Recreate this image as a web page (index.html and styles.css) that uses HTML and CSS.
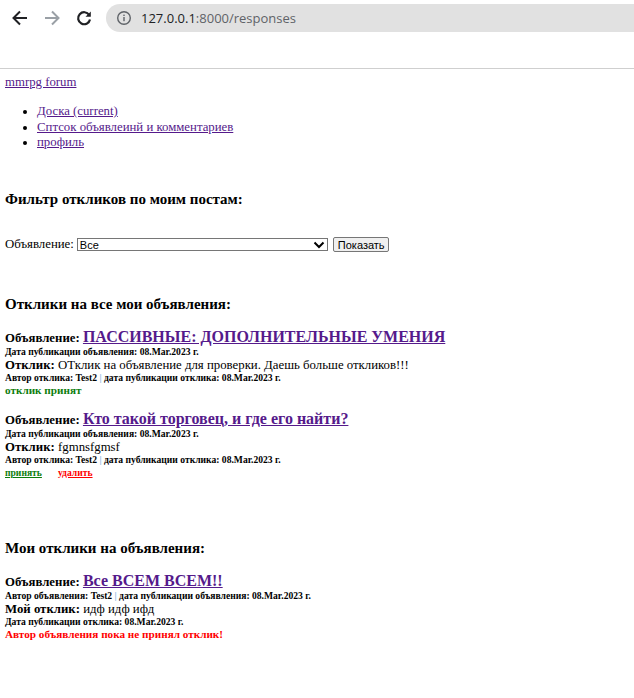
FILE: index.html
```html
<!DOCTYPE html>
<html lang="ru">
<head>
<meta charset="utf-8">
<title>responses</title>
<link rel="stylesheet" href="styles.css">
</head>
<body>
<div class="chrome">
  <div class="toolbar">
    <svg class="nav-icon" width="20" height="20" viewBox="0 0 20 20"><path d="M17 10H4M10 3.5L3.5 10 10 16.5" fill="none" stroke="#202124" stroke-width="2"/></svg>
    <svg class="nav-icon" width="20" height="20" viewBox="0 0 20 20"><path d="M3 10h13M10 3.5l6.5 6.5-6.5 6.5" fill="none" stroke="#9aa0a6" stroke-width="2"/></svg>
    <svg class="nav-icon" width="20" height="20" viewBox="0 0 20 20"><path d="M15.2 7A6 6 0 1 0 16 11.5" fill="none" stroke="#202124" stroke-width="2.2"/><path d="M16.8 3.5v5.3h-5.3z" fill="#202124"/></svg>
    <div class="omnibox">
      <svg class="info" width="16" height="16" viewBox="0 0 16 16"><circle cx="8" cy="8" r="6.3" fill="none" stroke="#5f6368" stroke-width="1.4"/><rect x="7.3" y="7" width="1.4" height="4.2" fill="#5f6368"/><rect x="7.3" y="4.6" width="1.4" height="1.4" fill="#5f6368"/></svg>
      <span class="host">127.0.0.1</span><span class="path">:8000/responses</span>
    </div>
  </div>
</div>
<div class="page">
  <div class="brand-row"><a class="brand" href="#">mmrpg forum</a></div>
  <ul class="menu">
    <li><a href="#">Доска (current)</a></li>
    <li><a href="#">Сптсок объявлеинй и комментариев</a></li>
    <li><a href="#">профиль</a></li>
  </ul>

  <h3 class="heading heading-filter">Фильтр откликов по моим постам:</h3>
  <form class="filter">
    <label class="filter-label">Объявление:</label>
    <span class="select"><span>Все</span><svg width="12" height="8" viewBox="0 0 12 8"><path d="M1.5 1.5L6 6l4.5-4.5" fill="none" stroke="#000" stroke-width="2"/></svg></span>
    <button type="button" class="btn">Показать</button>
  </form>

  <h3 class="heading heading-section">Отклики на все мои объявления:</h3>

  <div class="item">
    <div class="title"><b>Объявление:</b> <a href="#">ПАССИВНЫЕ: ДОПОЛНИТЕЛЬНЫЕ УМЕНИЯ</a></div>
    <div class="meta">Дата публикации объявления: 08.Mar.2023 г.</div>
    <div class="reply"><b>Отклик:</b> ОТклик на объявление для проверки. Даешь больше откликов!!!</div>
    <div class="meta">Автор отклика: Test2 <span class="bar">|</span> дата публикации отклика: 08.Mar.2023 г.</div>
    <div class="status ok">отклик принят</div>
  </div>

  <div class="item item-next">
    <div class="title"><b>Объявление:</b> <a href="#">Кто такой торговец, и где его найти?</a></div>
    <div class="meta">Дата публикации объявления: 08.Mar.2023 г.</div>
    <div class="reply"><b>Отклик:</b> fgmnsfgmsf</div>
    <div class="meta">Автор отклика: Test2 <span class="bar">|</span> дата публикации отклика: 08.Mar.2023 г.</div>
    <div class="actions"><a class="accept" href="#">принять</a><a class="delete" href="#">удалить</a></div>
  </div>

  <h3 class="heading heading-mine">Мои отклики на объявления:</h3>

  <div class="item">
    <div class="title"><b>Объявление:</b> <a href="#">Все ВСЕМ ВСЕМ!!</a></div>
    <div class="meta">Автор объявления: Test2 <span class="bar">|</span> дата публикации объявления: 08.Mar.2023 г.</div>
    <div class="reply"><b>Мой отклик:</b> идф идф ифд</div>
    <div class="meta">Дата публикации отклика: 08.Mar.2023 г.</div>
    <div class="status wait">Автор объявления пока не принял отклик!</div>
  </div>
</div>
</body>
</html>
```

FILE: styles.css
```css
html, body {
  margin: 0;
  padding: 0;
  background: #fff;
}

.chrome {
  height: 68px;
  border-bottom: 1px solid #cfcfcf;
  box-sizing: content-box;
}

.toolbar {
  display: flex;
  align-items: center;
  height: 36px;
  padding-left: 10px;
}

.nav-icon {
  margin-right: 12px;
  flex: none;
}

.omnibox {
  flex: 1;
  height: 28px;
  background: #e1e1e1;
  border-radius: 14px 0 0 14px;
  display: flex;
  align-items: center;
  padding-left: 10px;
  font-family: "Open Sans", "Noto Sans", sans-serif;
  font-size: 13px;
}

.info {
  margin-right: 9px;
  flex: none;
}

.host {
  color: #202124;
}

.path {
  color: #5f6368;
}

.page {
  padding: 0 5px;
  font-family: "Liberation Serif", "Times New Roman", serif;
  font-size: 12.8px;
  color: #000;
}

a {
  color: #551a8b;
}

.brand-row {
  margin-top: 6px;
  line-height: 15px;
}

.menu {
  margin: 14px 0 0;
  padding-left: 32px;
  line-height: 15.5px;
}

.heading {
  font-size: 15px;
  line-height: 17px;
  font-weight: bold;
  margin: 0;
}

.heading-filter {
  margin-top: 40px;
}

.filter {
  margin-top: 29px;
  height: 16px;
  display: flex;
  align-items: center;
}

.filter-label {
  margin-right: 3px;
}

.select {
  box-sizing: border-box;
  width: 251px;
  height: 13px;
  border: 1px solid #767676;
  display: flex;
  align-items: center;
  justify-content: space-between;
  padding: 0 2px;
  font-family: "Liberation Sans", Arial, sans-serif;
  font-size: 11px;
  margin-right: 5px;
}

.btn {
  box-sizing: border-box;
  font-family: "Liberation Sans", Arial, sans-serif;
  font-size: 11px;
  padding: 0 4px;
  width: 56px;
  height: 15px;
  line-height: 12px;
  background: #efefef;
  border: 1px solid #767676;
  border-radius: 2px;
  color: #000;
}

.heading-section {
  margin-top: 43px;
}

.heading-mine {
  margin-top: 61px;
}

.item {
  margin-top: 16px;
}

.item-next {
  margin-top: 14px;
}

.title {
  font-size: 12.8px;
  line-height: 16px;
}

.title a {
  font-size: 16px;
  font-weight: bold;
}

.meta {
  font-size: 9.6px;
  font-weight: bold;
  line-height: 12px;
}

.bar {
  color: #7fb4e0;
}

.reply {
  font-size: 12.8px;
  line-height: 14px;
}

.status {
  font-size: 11.2px;
  font-weight: bold;
  line-height: 13px;
}

.ok {
  color: #0d7d0d;
}

.wait {
  color: #ff0000;
}

.actions {
  font-size: 9.6px;
  font-weight: bold;
  line-height: 13px;
}

.accept {
  color: #0d7d0d;
  margin-right: 16px;
}

.delete {
  color: #ff0000;
}
```
